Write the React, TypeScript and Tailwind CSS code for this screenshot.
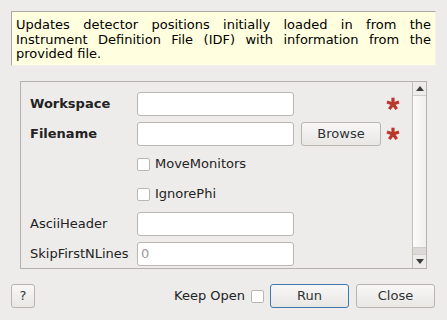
import React from "react";

const Asterisk = () => (
  <svg width="14" height="14" viewBox="-7 -7 14 14" className="block">
    {[-90, -18, 54, 126, 198].map((a) => {
      const r = (a * Math.PI) / 180;
      return (
        <line
          key={a}
          x1={0}
          y1={0}
          x2={6.3 * Math.cos(r)}
          y2={6.3 * Math.sin(r)}
          stroke="#b8392b"
          strokeWidth={3.2}
        />
      );
    })}
  </svg>
);

const Input = ({ value }: { value?: string }) => (
  <div className="w-[157px] h-[24px] bg-white border border-[#bab7b3] rounded-[3px] flex items-center px-[3px] text-[#9a9a9a]">
    {value}
  </div>
);

const Btn = ({ children, w, blue }: { children: React.ReactNode; w: string; blue?: boolean }) => (
  <div
    className={`${w} h-[24px] rounded-[3px] border flex items-center justify-center bg-gradient-to-b from-[#f8f7f6] to-[#e9e7e4] text-[#2e3436] ${
      blue ? "border-[#3b78b0]" : "border-[#b8b5b1]"
    }`}
  >
    {children}
  </div>
);

const Check = () => (
  <div className="w-[13px] h-[13px] bg-white border border-[#bab7b3] rounded-[2px]" />
);

export default function App() {
  return (
    <div
      className="w-[447px] h-[320px] bg-[#edecea] text-[13px] text-[#222] overflow-hidden"
      style={{ fontFamily: '"DejaVu Sans", sans-serif' }}
    >
      <div className="pt-[11px] pl-[11px]">
        <div className="w-[425px] h-[55px] bg-[#ffffdf] border-t border-l border-[#aaa8a4] border-r border-b border-r-[#f2f1ef] border-b-[#f2f1ef] pl-[4px] pr-[4px] pt-[6px] leading-[14.5px] text-black text-justify">
          Updates detector positions initially loaded in from the Instrument Definition File (IDF) with information from the provided file.
        </div>
      </div>

      <div className="ml-[20px] mt-[15px] w-[407px] h-[188px] border border-[#b5b2ae] flex overflow-hidden">
        <div className="flex-1 pt-[10px] pl-[9px] flex flex-col gap-[6px]">
          <div className="flex items-center h-[24px]">
            <div className="w-[107px] font-bold">Workspace</div>
            <Input />
            <div className="ml-[92px]">
              <Asterisk />
            </div>
          </div>
          <div className="flex items-center h-[24px]">
            <div className="w-[107px] font-bold">Filename</div>
            <Input />
            <div className="ml-[7px]">
              <Btn w="w-[80px]">Browse</Btn>
            </div>
            <div className="ml-[5px]">
              <Asterisk />
            </div>
          </div>
          <div className="flex items-center h-[24px] pl-[107px] gap-[5px]">
            <Check />
            <span>MoveMonitors</span>
          </div>
          <div className="flex items-center h-[24px] pl-[107px] gap-[5px]">
            <Check />
            <span>IgnorePhi</span>
          </div>
          <div className="flex items-center h-[24px]">
            <div className="w-[107px]">AsciiHeader</div>
            <Input />
          </div>
          <div className="flex items-center h-[24px]">
            <div className="w-[107px]">SkipFirstNLines</div>
            <Input value="0" />
          </div>
        </div>
        <div className="w-[14px] border-l border-[#c2bfbb] flex flex-col">
          <div className="h-[14px] border-b border-[#d0cdca] bg-[#edecea] flex items-center justify-center">
            <svg width="8" height="5" viewBox="0 0 8 5">
              <polygon points="0,5 8,5 4,0" fill="#3c3c3c" />
            </svg>
          </div>
          <div className="flex-1 bg-gradient-to-r from-[#fbfbfa] to-[#f0efee]" />
          <div className="h-[7px] bg-[#dcdad7] border-t border-[#cfccc9]" />
          <div className="h-[14px] border-t border-[#d0cdca] bg-[#edecea] flex items-center justify-center">
            <svg width="8" height="5" viewBox="0 0 8 5">
              <polygon points="0,0 8,0 4,5" fill="#3c3c3c" />
            </svg>
          </div>
        </div>
      </div>

      <div className="flex items-center mt-[15px] pl-[11px] h-[24px]">
        <Btn w="w-[24px]">?</Btn>
        <div className="ml-auto flex items-center">
          <span className="mr-[6px]">Keep Open</span>
          <Check />
          <div className="ml-[6px]">
            <Btn w="w-[79px]" blue>
              Run
            </Btn>
          </div>
          <div className="ml-[7px] mr-[12px]">
            <Btn w="w-[79px]">Close</Btn>
          </div>
        </div>
      </div>
    </div>
  );
}
